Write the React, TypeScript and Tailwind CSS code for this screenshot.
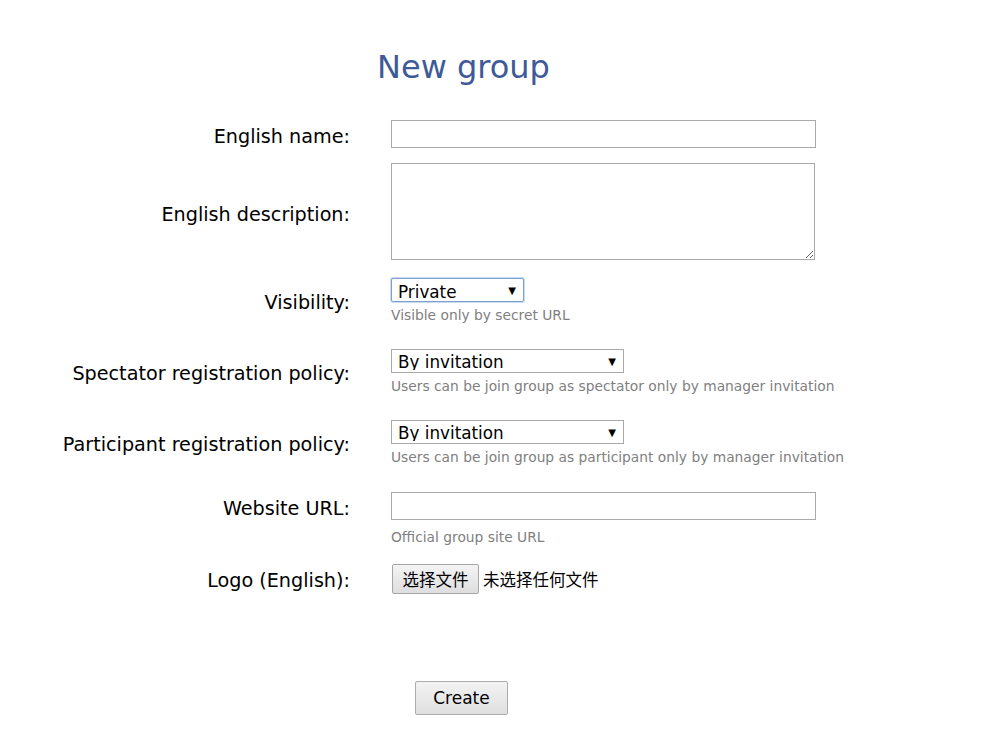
import React from "react";

const font = { fontFamily: '"DejaVu Sans", Verdana, sans-serif' };

const Select = ({ value, width }: { value: string; width: string }) => (
  <div className={`relative ${width} h-[24px]`}>
    <select
      defaultValue={value}
      className="appearance-none w-full h-full border border-[#a9a9a9] bg-white pl-[6px] pt-[2px] text-[16.8px] text-black leading-none outline-none"
    >
      <option>{value}</option>
    </select>
    {/* arrow */}
    <span className="pointer-events-none absolute right-[8px] top-[5px] text-[10px] text-black">▼</span>
  </div>
);

const Hint = ({ children }: { children: React.ReactNode }) => (
  <p className="mt-[5px] text-[13.8px] leading-[16px] text-[#808080]">{children}</p>
);

const Row = ({
  label,
  children,
  className = "",
  labelClass = "",
}: {
  label: string;
  children: React.ReactNode;
  className?: string;
  labelClass?: string;
}) => (
  <div className={`flex ${className}`}>
    <label className={`w-[351px] shrink-0 text-right text-[19.2px] text-black pr-[1px] ${labelClass}`}>{label}</label>
    <div className="ml-[40px]">{children}</div>
  </div>
);

export default function App() {
  return (
    <div className="min-h-screen bg-white" style={font}>
      {/* HEADING */}
      <h1 className="pt-[47px] pl-[377px] text-[32px] leading-[40px] text-[#3e5a99]">New group</h1>

      <form className="mt-[33px]">
        <Row label="English name:" className="items-center" labelClass="leading-none translate-y-[3px]">
          <input className="block w-[425px] h-[28px] border border-[#a9a9a9] outline-none" />
        </Row>

        <Row label="English description:" className="items-center mt-[15px]" labelClass="leading-none translate-y-[3px]">
          <textarea className="block w-[424px] h-[97px] border border-[#a9a9a9] outline-none resize" />
        </Row>

        <Row label="Visibility:" className="items-center mt-[18px]" labelClass="leading-none translate-y-[2px]">
          <div className="relative w-[133px] h-[24px]">
            <select
              defaultValue="Private"
              className="appearance-none w-full h-full border border-[#7da2ce] rounded-[2px] shadow-[0_0_0_1px_#c8dbf3] bg-white pl-[6px] pt-[1px] text-[16.8px] text-black outline-none"
            >
              <option>Private</option>
            </select>
            <span className="pointer-events-none absolute right-[8px] top-[5px] text-[10px] text-black">▼</span>
          </div>
          <Hint>Visible only by secret URL</Hint>
        </Row>

        <Row label="Spectator registration policy:" className="items-center mt-[26px]" labelClass="leading-none translate-y-[2px]">
          <Select value="By invitation" width="w-[233px]" />
          <Hint>Users can be join group as spectator only by manager invitation</Hint>
        </Row>

        <Row label="Participant registration policy:" className="items-center mt-[26px]" labelClass="leading-none translate-y-[2px]">
          <Select value="By invitation" width="w-[233px]" />
          <Hint>Users can be join group as participant only by manager invitation</Hint>
        </Row>

        <Row label="Website URL:" className="items-start mt-[27px]" labelClass="leading-[29px] translate-y-[2px]">
          <input className="block w-[425px] h-[28px] border border-[#a9a9a9] outline-none" />
          <p className="mt-[9px] text-[13.8px] leading-[16px] text-[#808080]">Official group site URL</p>
        </Row>

        <Row label="Logo (English):" className="items-center mt-[19px]" labelClass="leading-none translate-y-[2px]">
          <div className="flex items-center" style={{ fontFamily: '"Noto Sans CJK SC", sans-serif' }}>
            <button
              type="button"
              className="ml-[1px] h-[30px] w-[87px] border border-[#a6a6a6] rounded-[2px] bg-gradient-to-b from-[#f4f4f4] to-[#dedede] text-[16.5px] text-black leading-none"
            >
              选择文件
            </button>
            <span className="ml-[4px] text-[16.5px] text-black">未选择任何文件</span>
          </div>
        </Row>

        {/* SUBMIT */}
        <div className="mt-[87px] pl-[415px]">
          <button
            type="button"
            className="w-[93px] h-[34px] pt-[2px] border border-[#adadad] rounded-[2px] bg-gradient-to-b from-[#f3f3f3] to-[#dfdfdf] text-[17px] text-black"
          >
            Create
          </button>
        </div>
      </form>
    </div>
  );
}
